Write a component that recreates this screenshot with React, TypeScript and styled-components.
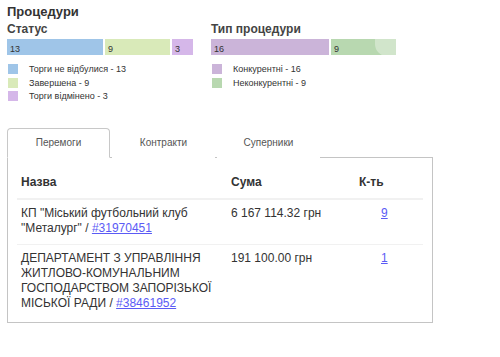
import React from "react";
import styled, { createGlobalStyle } from "styled-components";

const Global = createGlobalStyle`
  html, body { margin: 0; padding: 0; background: #fff; }
  body { font-family: "Liberation Sans", Arial, sans-serif; color: #333; }
`;

const Page = styled.div`
  width: 500px;
  height: 357px;
  padding: 4px 0 0 7px;
  box-sizing: border-box;
  position: relative;
  overflow: hidden;
`;

const Title = styled.div`
  font-size: 13px;
  font-weight: bold;
  color: #333;
  line-height: 15px;
`;

const Charts = styled.div`
  display: flex;
  gap: 18px;
  margin-top: 3px;
`;

const Chart = styled.div`
  width: 186px;
  display: flex;
  flex-direction: column;
`;

const ChartTitle = styled.div`
  font-size: 12px;
  font-weight: bold;
  color: #444;
  line-height: 14px;
`;

const Bar = styled.div`
  display: flex;
  gap: 2px;
  height: 16px;
  margin-top: 3px;
`;

const Segment = styled.div<{ $c: string }>`
  background: ${(p) => p.$c};
  font-size: 9px;
  color: #333;
  display: flex;
  align-items: flex-end;
  padding: 0 0 1px 3px;
  box-sizing: border-box;
  line-height: 10px;
`;

const Legend = styled.div`
  display: flex;
  flex-direction: column;
  gap: 3.5px;
  margin-top: 9px;
  padding-left: 1px;
`;

const LegendRow = styled.div`
  display: flex;
  align-items: center;
  font-size: 9px;
  color: #333;
  height: 10px;
`;

const Swatch = styled.span<{ $c: string }>`
  width: 10px;
  height: 10px;
  background: ${(p) => p.$c};
  margin-right: 11px;
  flex: none;
`;

const TabsBox = styled.div`
  margin-top: 27px;
  width: 426px;
`;

const TabList = styled.div`
  display: flex;
  height: 30px;
  position: relative;
  z-index: 1;
`;

const Tab = styled.div<{ $active?: boolean }>`
  width: 103px;
  margin-right: 2px;
  box-sizing: border-box;
  display: flex;
  align-items: center;
  justify-content: center;
  font-size: 10px;
  color: #555;
  border: 1px solid ${(p) => (p.$active ? "#c8c8c8" : "transparent")};
  border-bottom: 1px solid ${(p) => (p.$active ? "#fff" : "transparent")};
  border-radius: 4px 4px 0 0;
  background: #fff;
  padding-bottom: 2px;
`;

const Panel = styled.div`
  border: 1px solid #c4c4c4;
  margin-top: -1px;
  padding: 8px 9px 20px 9px;
  height: 166px;
  box-sizing: border-box;
`;

const Table = styled.table`
  width: 100%;
  border-collapse: collapse;
  font-size: 12px;
  color: #333;
`;

const Th = styled.th<{ $w?: number }>`
  text-align: left;
  font-weight: bold;
  padding: 9px 4px 8px 4px;
  border-bottom: 2px solid #f1f1f1;
  line-height: 15px;
  width: ${(p) => (p.$w ? `${p.$w}px` : "auto")};
`;

const Td = styled.td<{ $count?: boolean }>`
  vertical-align: top;
  padding: 6px 4px 8px ${(p) => (p.$count ? "26px" : "4px")};
  line-height: 15px;
  text-align: left;
`;

const Tr = styled.tr`
  & + & td {
    border-top: 1px solid #f1f1f1;
  }
`;

const Link = styled.a`
  color: #5b5bf5;
  text-decoration: underline;
`;

const Watermark = styled.div`
  position: absolute;
  left: 375px;
  top: 12px;
  width: 105px;
  height: 44px;
  border-radius: 12px;
  background: rgba(255, 255, 255, 0.35);
  pointer-events: none;
`;

export default function App() {
  return (
    <>
      <Global />
      <Page>
        <Title>Процедури</Title>
        <Charts>
          <Chart>
            <ChartTitle>Статус</ChartTitle>
            <Bar>
              <Segment $c="#9fc5e8" style={{ width: 96 }}>13</Segment>
              <Segment $c="#d9eab9" style={{ width: 65 }}>9</Segment>
              <Segment $c="#d5b7e9" style={{ width: 21 }}>3</Segment>
            </Bar>
            <Legend>
              <LegendRow><Swatch $c="#9fc5e8" />Торги не відбулися - 13</LegendRow>
              <LegendRow><Swatch $c="#d9eab9" />Завершена - 9</LegendRow>
              <LegendRow><Swatch $c="#d5b7e9" />Торги відмінено - 3</LegendRow>
            </Legend>
          </Chart>
          <Chart>
            <ChartTitle>Тип процедури</ChartTitle>
            <Bar>
              <Segment $c="#cbb4d9" style={{ width: 118 }}>16</Segment>
              <Segment $c="#b8d8b0" style={{ width: 65 }}>9</Segment>
            </Bar>
            <Legend>
              <LegendRow><Swatch $c="#cbb4d9" />Конкурентні - 16</LegendRow>
              <LegendRow><Swatch $c="#b8d8b0" />Неконкурентні - 9</LegendRow>
            </Legend>
          </Chart>
        </Charts>
        <TabsBox>
          <TabList>
            <Tab $active>Перемоги</Tab>
            <Tab>Контракти</Tab>
            <Tab>Суперники</Tab>
          </TabList>
          <Panel>
            <Table>
              <thead>
                <tr>
                  <Th $w={202}>Назва</Th>
                  <Th $w={120}>Сума</Th>
                  <Th>К-ть</Th>
                </tr>
              </thead>
              <tbody>
                <Tr>
                  <Td>КП "Міський футбольний клуб "Металург" / <Link href="#">#31970451</Link></Td>
                  <Td>6 167 114.32 грн</Td>
                  <Td $count><Link href="#">9</Link></Td>
                </Tr>
                <Tr>
                  <Td>ДЕПАРТАМЕНТ З УПРАВЛІННЯ ЖИТЛОВО-КОМУНАЛЬНИМ ГОСПОДАРСТВОМ ЗАПОРІЗЬКОЇ МІСЬКОЇ РАДИ / <Link href="#">#38461952</Link></Td>
                  <Td>191 100.00 грн</Td>
                  <Td $count><Link href="#">1</Link></Td>
                </Tr>
              </tbody>
            </Table>
          </Panel>
        </TabsBox>
        <Watermark />
      </Page>
    </>
  );
}
